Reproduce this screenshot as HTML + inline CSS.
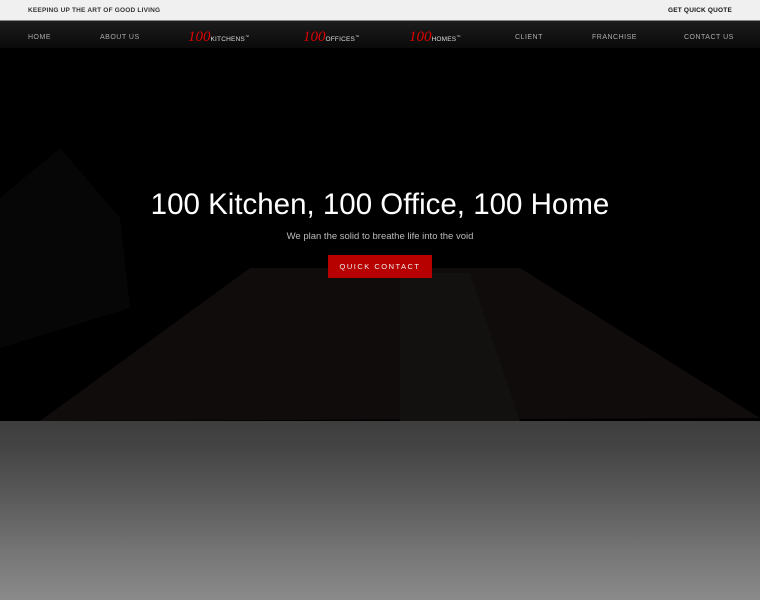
<!DOCTYPE html>
<html><head><meta charset="utf-8"><style>
*{margin:0;padding:0;box-sizing:border-box}
body{width:760px;height:600px;overflow:hidden;font-family:"Liberation Sans",sans-serif;background:#000}
.top{height:21px;background:#f0f0f0;border-bottom:1px solid #888;position:relative;font-size:6.5px;font-weight:bold;color:#333;letter-spacing:.2px}
.top .l{position:absolute;left:28px;top:7px}
.top .r{position:absolute;right:28px;top:7px;color:#111}
.nav{height:27px;background:linear-gradient(#1c1c1c,#0a0a0a);position:relative;color:#aaa;font-size:7px;letter-spacing:.5px}
.nav span{position:absolute;top:13px}
.nav .b{top:8px;color:#ddd;font-size:6.5px;letter-spacing:.2px;white-space:nowrap}
.nav .b i{font-family:"Liberation Serif",serif;color:#d00;font-size:15px;letter-spacing:0}
.nav .b sup{font-size:4px}
.hero{position:relative;height:373px;background:#000;overflow:hidden}
.hero svg{position:absolute;left:0;top:0}
h1{position:absolute;top:140px;width:100%;text-align:center;color:#fff;font-weight:normal;font-size:29.5px}
.sub{position:absolute;top:183px;width:100%;text-align:center;color:#bbb;font-size:9.5px}
.btn{position:absolute;left:328px;top:207px;width:104px;height:23px;background:#b70000;color:#eee;font-size:7.5px;letter-spacing:1.5px;text-align:center;line-height:23px}
.grad{height:179px;background:linear-gradient(#3e3e3e,#444 15%,#5c5c5c 45%,#777 75%,#8a8a8a)}
</style></head><body>
<div class="top"><span class="l">KEEPING UP THE ART OF GOOD LIVING</span><span class="r">GET QUICK QUOTE</span></div>
<div class="nav">
<span style="left:28px">HOME</span>
<span style="left:100px">ABOUT US</span>
<span class="b" style="left:188px"><i>100</i>KITCHENS<sup>™</sup></span>
<span class="b" style="left:303px"><i>100</i>OFFICES<sup>™</sup></span>
<span class="b" style="left:409px"><i>100</i>HOMES<sup>™</sup></span>
<span style="left:515px">CLIENT</span>
<span style="left:592px">FRANCHISE</span>
<span style="left:684px">CONTACT US</span>
</div>
<div class="hero">
<svg width="760" height="373">
<polygon points="250,220 520,220 760,370 40,373" fill="#0f0c0b"/>
<polygon points="400,225 470,225 520,373 400,373" fill="#131010"/>
<polygon points="0,150 60,100 120,170 130,260 0,300" fill="#070606"/>
</svg>
<h1>100 Kitchen, 100 Office, 100 Home</h1>
<div class="sub">We plan the solid to breathe life into the void</div>
<div class="btn">QUICK CONTACT</div>
</div>
<div class="grad"></div>
</body></html>
